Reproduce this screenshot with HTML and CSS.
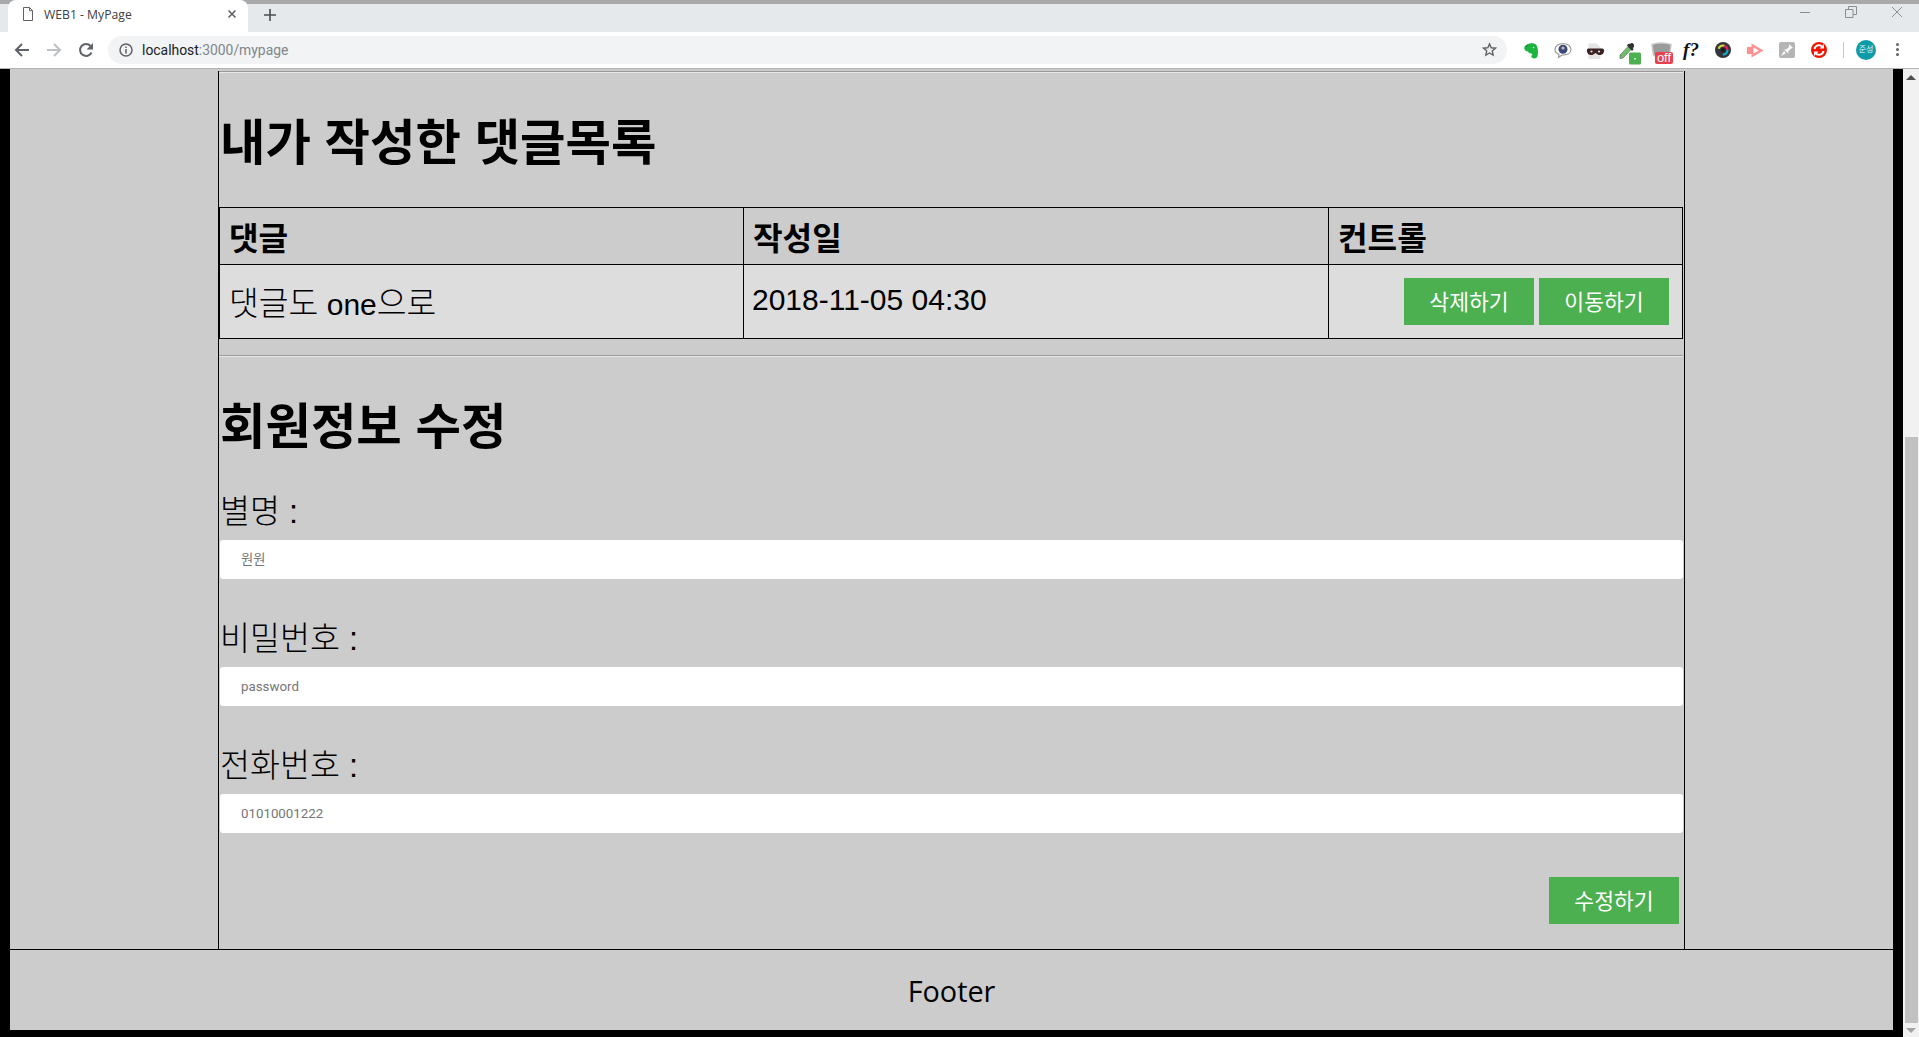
FILE: index.html
```html
<!DOCTYPE html>
<html lang="ko">
<head>
  <meta charset="UTF-8" />
  <title>WEB1 - MyPage</title>
  <link rel="stylesheet" href="styles.css">
</head>
<body>

  <!-- Browser tabs -->
  <div class="tabstrip">
    <div class="tab">
      <svg class="tab-doc" width="12" height="14" viewBox="0 0 12 14"><path d="M1.500 .5h6l3 3.200v9.800h-9z M7.500 .5v3.200h3" fill="none" stroke="#5f6368"/></svg>
      <span class="tab-title">WEB1 - MyPage</span>
      <svg class="tab-close" width="10" height="10" viewBox="0 0 10 10"><path d="M1.500 1.500l7 7M8.500 1.500l-7 7" stroke="#5f6368" stroke-width="1.600"/></svg>
    </div>
    <svg class="tab-new" width="12" height="12" viewBox="0 0 12 12"><path d="M6 0v12M0 6h12" stroke="#4a4d51" stroke-width="1.600"/></svg>
    <div class="win-btns">
      <svg width="12" height="12" viewBox="0 0 12 12"><path d="M1 6.500h10" stroke="#8a8d90"/></svg>
      <svg width="12" height="12" viewBox="0 0 12 12"><path d="M.5 3.500h7.500v8h-7.500z M3.500 3.500v-3h8v8h-3.500" fill="none" stroke="#8a8d90"/></svg>
      <svg width="12" height="12" viewBox="0 0 12 12"><path d="M1 1l10 10M11 1l-10 10" stroke="#8a8d90"/></svg>
    </div>
  </div>

  <!-- Toolbar -->
  <div class="toolbar">
    <div class="nav-btn"><svg width="16" height="16" viewBox="0 0 16 16"><path d="M15 8H2M8 2L2 8l6 6" fill="none" stroke="#5f6368" stroke-width="2"/></svg></div>
    <div class="nav-btn"><svg width="16" height="16" viewBox="0 0 16 16"><path d="M1 8h13M8 2l6 6-6 6" fill="none" stroke="#bdc1c6" stroke-width="2"/></svg></div>
    <div class="nav-btn"><svg width="16" height="16" viewBox="0 0 16 16"><path d="M13.500 10.500A6 6 0 1 1 12.600 4" fill="none" stroke="#5f6368" stroke-width="2"/><path d="M15 1v6.500H8.500z" fill="#5f6368"/></svg></div>
    <div class="omnibox">
      <svg class="omni-info" width="14" height="14" viewBox="0 0 14 14"><circle cx="7" cy="7" r="6" fill="none" stroke="#5f6368" stroke-width="1.500"/><path d="M7 6v4.500M7 3.500v1.500" stroke="#5f6368" stroke-width="1.500"/></svg>
      <span class="url"><b>localhost</b>:3000/mypage</span>
      <svg class="omni-star" width="15" height="15" viewBox="0 0 24 24"><path d="M12 3l2.700 6.200 6.800.6-5.100 4.500 1.500 6.700L12 17.500 6.100 21l1.500-6.700L2.500 9.800l6.800-.6z" fill="none" stroke="#5f6368" stroke-width="2.200"/></svg>
    </div>

    <div class="exts">
      <div class="ext"><svg width="32" height="32" viewBox="0 0 32 32"><path d="M9.500 13.500L13 10c2-1 6-1 8 .5 2 2.500 2.500 8.500 1.500 11.500-.5 2.500-3.500 3-5 2-1.500-1-2-2.500 0-3l-1-1.500c-2 0-3-1-3.500-2-2 0-4-1.500-4-4.500z" fill="#1db341"/><path d="M9 13l3.500-.3.300-2.700z" fill="#128a32"/><circle cx="18.500" cy="13.500" r=".8" fill="#c8f0d0"/></svg></div>
      <div class="ext"><svg width="32" height="32" viewBox="0 0 32 32"><path d="M16 9.500c4.500 0 8 2.500 8 6s-3.500 5.500-8 5.500h-1l-3.500 2.500.5-3.200c-2.500-1-4-2.800-4-4.800 0-3.500 3.500-6 8-6z" fill="#fff" stroke="#9a9a9a" stroke-width="1.200"/><circle cx="16" cy="15.300" r="4.500" fill="#3b4a78"/><circle cx="16" cy="14" r="1.600" fill="#c9b7b0"/></svg></div>
      <div class="ext"><svg width="32" height="32" viewBox="0 0 32 32"><path d="M9.500 9.500h8l4 4v11.500h-12z" fill="#e4e4e4"/><path d="M9 14.500h14q2.500 0 2 3-.5 3-3.500 3.500h-2l-3-2-3 2h-2q-3-.5-3.500-3.500-.5-3 1.500-3z" fill="#3b2222"/><circle cx="12.500" cy="17.500" r="1.100" fill="#ddd"/><circle cx="20" cy="17.500" r="1.100" fill="#ddd"/></svg></div>
      <div class="ext"><svg width="32" height="32" viewBox="0 0 32 32"><path d="M9 21l9-9.500 3 3-9 9.500-3 .5z" fill="#6cbf6a" stroke="#777" stroke-width=".8"/><path d="M17 10l3-.5c1-1.500 4 1 3 3l-1 2 .5 1-1.500 1.500-5-5.500z" fill="#333"/><rect x="18" y="18.500" width="12" height="12" rx="1.500" fill="#4caf50"/><rect x="23" y="24" width="2" height="1.500" fill="#cfe9cf"/></svg></div>
      <div class="ext ext-off">
        <svg width="32" height="32" viewBox="0 0 32 32"><path d="M9 10.500q9-3 19 0l-1.500 11h-16z" fill="#9a9a9a" stroke="#c8c8c8" stroke-width="1.500"/></svg>
        <span class="off-badge">off</span>
      </div>
      <div class="ext ext-f">f?</div>
      <div class="ext"><svg width="32" height="32" viewBox="0 0 32 32"><circle cx="16" cy="16" r="8" fill="#33363b"/><circle cx="16" cy="16" r="4.500" fill="none" stroke="#00bcd4" stroke-width="2" stroke-dasharray="7 22"/><circle cx="16" cy="16" r="4.500" fill="none" stroke="#e91e63" stroke-width="2" stroke-dasharray="7 22" stroke-dashoffset="7"/><circle cx="16" cy="16" r="4.500" fill="none" stroke="#cddc39" stroke-width="2" stroke-dasharray="7 22" stroke-dashoffset="14"/><circle cx="16" cy="16" r="2" fill="#1b1b1b"/></svg></div>
      <div class="ext"><svg width="32" height="32" viewBox="0 0 32 32"><path d="M8 13h4.500V9.500L24.500 16.500 12.500 23.500V20H8z" fill="#ff8f8f"/><path d="M14.500 13.500v6l5.500-3z" fill="#fff"/></svg></div>
      <div class="ext"><svg width="32" height="32" viewBox="0 0 32 32"><rect x="8" y="8" width="16" height="16" rx="2" fill="#b5b5b5"/><path d="M18 10l4 4-2 .5-2.500 2.500-.3 2.500-4-4 2.500-.3 2.500-2.500zM13 17l-3 5 5-3z" fill="#fff"/></svg></div>
      <div class="ext"><svg width="32" height="32" viewBox="0 0 32 32"><circle cx="16" cy="16" r="8" fill="#f01400"/><path d="M11.500 15a4.500 4.500 0 0 1 8-2M20.500 17a4.500 4.500 0 0 1-8 2" fill="none" stroke="#fff" stroke-width="2"/><path d="M21 10v4.500h-4.500zM11 22v-4.500h4.500z" fill="#fff"/></svg></div>
    </div>
    <div class="tb-sep"></div>
    <div class="avatar">준성</div>
    <div class="menu-dots"><i></i><i></i><i></i></div>
  </div>

  <!-- Page area -->
  <div class="viewport">
    <div class="page">
      <div class="layout">
        <main class="content">
          <hr class="rule first">
          <h1 class="heading h-list">내가 작성한 댓글목록</h1>

          <table class="reply-table">
            <tr>
              <th class="col-reply">댓글</th>
              <th class="col-date">작성일</th>
              <th>컨트롤</th>
            </tr>
            <tr>
              <td class="cell-text"><span class="ko">댓글도</span> one<span class="ko">으로</span></td>
              <td class="cell-text">2018-11-05 04:30</td>
              <td>
                <div class="controls">
                  <button class="btn">삭제하기</button>
                  <button class="btn">이동하기</button>
                </div>
              </td>
            </tr>
          </table>

          <hr class="rule second">
          <h1 class="heading h-edit">회원정보 수정</h1>

          <form>
            <label class="field-label">별명 :</label>
            <input class="field" type="text" placeholder="원원">
            <label class="field-label">비밀번호 :</label>
            <input class="field" type="password" placeholder="password">
            <label class="field-label">전화번호 :</label>
            <input class="field" type="text" placeholder="01010001222">
            <div class="form-actions">
              <button type="button" class="btn">수정하기</button>
            </div>
          </form>
        </main>
      </div>
      <footer class="footer">Footer</footer>
    </div>

    <!-- Scrollbar -->
    <div class="scrollbar">
      <div class="sb-arrow"><span class="tri-up"></span></div>
      <div class="sb-track"><div class="sb-thumb"></div></div>
      <div class="sb-arrow bottom"><span class="tri-down"></span></div>
    </div>
  </div>

</body>
</html>
```

FILE: styles.css
```css
* {
  box-sizing: border-box;
}
html, body {
  margin: 0;
  height: 100%;
  overflow: hidden;
}
body {
  display: flex;
  flex-direction: column;
  font-family: "Liberation Sans", "Noto Sans CJK KR", sans-serif;
  background: #000;
}

/* tabs */
.tabstrip {
  display: flex;
  align-items: center;
  height: 32px;
  border-top: 4px solid #a9a9a9;
  background: #e6e9ec;
}
.tab {
  display: flex;
  align-items: center;
  width: 240px;
  height: 32px;
  margin: -4px 0 0 8px;
  padding: 0 11px 4px 14px;
  background: #fff;
  border-radius: 8px 8px 0 0;
}
.tab-title {
  flex: 1;
  margin-left: 10px;
  font: 12.2px "Open Sans", sans-serif;
  color: #3c4043;
}
.tab-new {
  margin: -6px 0 0 16px;
}
.win-btns {
  display: flex;
  gap: 34px;
  margin: -12px 16px 0 auto;
}

/* toolbar */
.toolbar {
  display: flex;
  align-items: center;
  height: 37px;
  padding: 0 0 1px 6px;
  background: #fff;
  border-bottom: 1px solid #b4b4b4;
}
.nav-btn {
  display: flex;
  justify-content: center;
  align-items: center;
  width: 32px;
}
.omnibox {
  display: flex;
  align-items: center;
  width: 1399px;
  height: 28px;
  margin-left: 6px;
  padding: 0 10px 0 11px;
  background: #f1f3f4;
  border-radius: 14px;
}
.url {
  flex: 1;
  margin-left: 9px;
  font: 13.9px Roboto, sans-serif;
  color: #80868b;
}
.url b {
  font-weight: normal;
  color: #202124;
}
.exts {
  display: flex;
  margin-left: 8px;
}
.ext {
  position: relative;
  width: 32px;
  height: 32px;
}
.ext svg {
  display: block;
}
.off-badge {
  position: absolute;
  right: 2px;
  bottom: 2px;
  width: 18px;
  height: 12px;
  background: #e8404f;
  border-radius: 2px;
  color: #fff;
  font: 13px/11px "Liberation Sans", sans-serif;
  text-align: center;
}
.ext-f {
  font: italic bold 19px/32px "Liberation Serif", serif;
  text-align: center;
  color: #111;
}
.tb-sep {
  width: 1px;
  height: 16px;
  margin-left: 8px;
  background: #c8c8c8;
}
.avatar {
  width: 20px;
  height: 20px;
  margin-left: 12px;
  border-radius: 50%;
  background: #0f9aa8;
  color: #e8f6f7;
  font-size: 8px;
  line-height: 20px;
  text-align: center;
}
.menu-dots {
  display: flex;
  flex-direction: column;
  gap: 2px;
  margin-left: 20px;
}
.menu-dots i {
  width: 3px;
  height: 3px;
  border-radius: 50%;
  background: #5f6368;
}

/* page */
.viewport {
  flex: 1;
  display: flex;
  min-height: 0;
}
.page {
  flex: 1;
  display: flex;
  flex-direction: column;
  padding: 0 10px 7px;
  background: #000;
}
.layout {
  flex: 1;
  padding: 0 208px;
  background: #ccc;
}
.content {
  height: 100%;
  padding: 0 1px;
  border-left: 1px solid #000;
  border-right: 1px solid #000;
}
.rule {
  height: 2px;
  margin: 0 0 0 -1px;
  border: 0;
  border-top: 1px solid #999;
  border-bottom: 1px solid #e8e8e8;
}
.rule.first {
  margin-top: 2px;
}
.heading {
  margin: 0;
  font-size: 49.4px;
  line-height: 64px;
  font-weight: bold;
}
.h-list {
  padding: 38px 0 32px;
}
.h-edit {
  padding: 38px 0 31px;
}
.reply-table {
  width: 1464px;
  margin-left: -1px;
  border-collapse: collapse;
  font-size: 30px;
}
.reply-table th, .reply-table td {
  padding: 0 8px;
  border: 1px solid #000;
  text-align: left;
}
.reply-table th {
  height: 57px;
  padding-left: 9px;
  font-size: 32.2px;
}
.reply-table td {
  height: 74px;
  background: #ddd;
}
.reply-table td:first-child {
  padding-left: 9px;
}
.reply-table .cell-text {
  padding-bottom: 3px;
  font-weight: 300;
}
.ko {
  font-size: 32.4px;
}
.col-reply {
  width: 524px;
}
.col-date {
  width: 585px;
}
.rule.second {
  margin-top: 16px;
}
.controls {
  display: flex;
  justify-content: flex-end;
  gap: 5px;
  padding-right: 5px;
}
.btn {
  width: 130px;
  height: 47px;
  padding: 0 0 3px;
  border: 0;
  background: #4caf50;
  color: #fff;
  font: 21.6px "Liberation Sans", "Noto Sans CJK KR", sans-serif;
}
.field-label {
  display: block;
  margin-bottom: 6px;
  font-size: 32.6px;
  font-weight: 300;
  line-height: 44px;
}
.field {
  display: block;
  width: 100%;
  height: 39px;
  margin-bottom: 38px;
  padding: 0 21px;
  border: 0;
  border-radius: 3px;
  background: #fff;
  font: 13.3px Roboto, "Noto Sans CJK KR", sans-serif;
}
.form-actions {
  display: flex;
  justify-content: flex-end;
  margin-top: 44px;
  padding-right: 4px;
}
.footer {
  height: 81px;
  border-top: 1px solid #000;
  background: #ccc;
  font: 28.8px/81px "Open Sans", sans-serif;
  text-align: center;
}

/* scrollbar */
.scrollbar {
  display: flex;
  flex-direction: column;
  width: 16px;
  background: #f1f1f1;
}
.sb-arrow {
  display: flex;
  justify-content: center;
  align-items: center;
  height: 17px;
}
.sb-arrow.bottom {
  height: 14px;
}
.tri-up, .tri-down {
  border-left: 5px solid transparent;
  border-right: 5px solid transparent;
}
.tri-up {
  border-bottom: 5px solid #505050;
}
.tri-down {
  border-top: 5px solid #a3a3a3;
}
.sb-track {
  flex: 1;
  display: flex;
  flex-direction: column;
  justify-content: flex-end;
}
.sb-thumb {
  height: 586px;
  margin: 0 1px 0 2px;
  background: #c1c1c1;
}
```
